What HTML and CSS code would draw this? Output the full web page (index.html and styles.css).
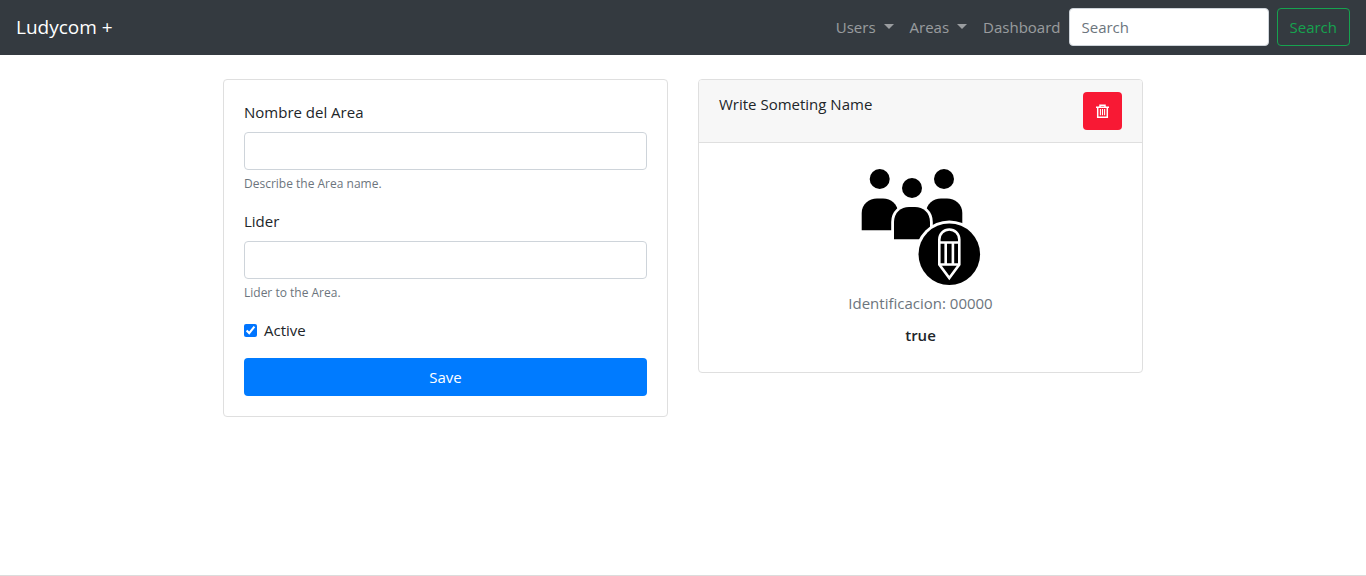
FILE: index.html
```html
<!DOCTYPE html>
<html lang="es">
<head>
<meta charset="utf-8">
<meta name="viewport" content="width=device-width, initial-scale=1">
<title>Ludycom +</title>
<link rel="stylesheet" href="styles.css">
</head>
<body>
<nav class="navbar">
  <a class="brand" href="#">Ludycom +</a>
  <ul class="nav-list">
    <li><a class="nav-link has-caret" href="#">Users</a></li>
    <li><a class="nav-link has-caret" href="#">Areas</a></li>
    <li><a class="nav-link" href="#">Dashboard</a></li>
  </ul>
  <form class="search">
    <input class="control search-input" type="search" placeholder="Search" aria-label="Search">
    <button class="btn btn-outline" type="submit">Search</button>
  </form>
</nav>
<main class="content">
  <form class="card card-body">
    <div class="group">
      <label class="label" for="name">Nombre del Area</label>
      <input class="control" id="name" type="text">
      <small class="hint">Describe the Area name.</small>
    </div>
    <div class="group">
      <label class="label" for="lider">Lider</label>
      <input class="control" id="lider" type="text">
      <small class="hint">Lider to the Area.</small>
    </div>
    <div class="group check">
      <input class="check-input" id="active" type="checkbox" checked>
      <label for="active">Active</label>
    </div>
    <button class="btn btn-primary" type="submit">Save</button>
  </form>
  <section class="card">
    <header class="card-header">
      <span>Write Someting Name</span>
      <button class="btn btn-danger" type="button" aria-label="Delete">
        <svg width="13" height="14" viewBox="0 0 13 14" fill="none" stroke="currentColor">
          <path d="M0 3.2h13M4 3V1.2h5V3" stroke-width="1.5"/>
          <path d="M1.7 3.5v9.7h9.6V3.5" stroke-width="1.5"/>
          <path d="M4.4 5v6.3M6.5 5v6.3M8.6 5v6.3" stroke-width="1.1"/>
        </svg>
      </button>
    </header>
    <div class="card-body profile">
      <svg class="picture" width="128" height="128" viewBox="0 0 128 128" aria-hidden="true">
        <circle cx="22.7" cy="16" r="10"/>
        <circle cx="55" cy="25" r="10"/>
        <circle cx="87" cy="16" r="10"/>
        <path d="M4.7 67.2V50C4.7 41 12 35.5 20 35.5h6C34 35.5 41 41 41 50v17.2z"/>
        <path d="M69 67.2V50c0-9 7-14.5 15-14.5h6c8 0 15.3 5.5 15.3 14.5v17.2z"/>
        <path d="M37 76.3V59C37 49.500 44 44 52 44h6c8 0 15 5.500 15 15v17.300z" stroke="#fff" stroke-width="5.600"/>
        <path d="M37 76.300V59C37 49.500 44 44 52 44h6c8 0 15 5.500 15 15v17.300z"/>
        <circle cx="92.300" cy="91.300" r="33.800" fill="#fff"/>
        <circle cx="92.300" cy="91.300" r="30.800"/>
        <g fill="none" stroke="#fff" stroke-width="2.600">
          <path d="M82.300 101.500V76.500a10 10 0 0 1 20 0V101.500l-10 13.500z"/>
          <path d="M82.300 79.500h20M82.300 101.500h20M88.700 79.500v22M95.900 79.500v22"/>
        </g>
      </svg>
      <p class="ident">Identificacion: 00000</p>
      <p class="state">true</p>
    </div>
  </section>
</main>
<footer class="footer"></footer>
</body>
</html>
```
FILE: styles.css
```css
* { box-sizing: border-box; }
body {
  margin: 0;
  min-height: 100vh;
  display: flex;
  flex-direction: column;
  font: 15px/24px "Open Sans", "Noto Sans", sans-serif;
  color: #212529;
  background: #fff;
}
a { color: inherit; text-decoration: none; }
p { margin: 0; }
.navbar {
  display: flex;
  align-items: center;
  padding: 8px 16px;
  border-bottom: 1px solid #343a40;
  background: #343a40;
}
.brand { margin-right: auto; font-size: 19px; line-height: 30px; color: #fff; }
.nav-list { display: flex; margin: 0; padding: 0; list-style: none; }
.nav-link { display: block; padding: 0 8px; color: rgba(255, 255, 255, .5); }
.has-caret::after {
  content: "";
  display: inline-block;
  margin-left: 8px;
  vertical-align: 4px;
  border: 5px solid transparent;
  border-top-color: currentColor;
  border-bottom: 0;
}
.search { display: flex; gap: 8px; }
.control {
  display: block;
  width: 100%;
  height: 38px;
  padding: 6px 12px;
  border: 1px solid #ced4da;
  border-radius: 4px;
  font: inherit;
  color: #495057;
  background: #fff;
}
.control::placeholder { color: #6c757d; opacity: 1; }
.search-input { width: 200px; appearance: none; }
.btn {
  height: 38px;
  padding: 6px 12px;
  border: 1px solid transparent;
  border-radius: 4px;
  font: inherit;
  color: #fff;
  cursor: pointer;
}
.btn-outline { border-color: #16a34f; color: #16a34f; background: transparent; }
.btn-primary { width: 100%; background: #007bff; }
.btn-danger {
  display: flex;
  align-items: center;
  background: #f81934;
}
.content {
  flex: 1;
  width: 100%;
  max-width: 968px;
  margin: 0 auto;
  padding: 24px 24px;
  display: grid;
  grid-template-columns: 1fr 1fr;
  align-items: start;
  gap: 30px;
}
.card { border: 1px solid #dfdfdf; border-radius: 4px; overflow: hidden; }
.card-body { padding: 20px; }
.card-header {
  display: flex;
  justify-content: space-between;
  align-items: flex-start;
  padding: 12px 20px;
  border-bottom: 1px solid #dfdfdf;
  background: #f7f7f7;
}
.group { margin-bottom: 16px; }
.label { display: block; margin-bottom: 8px; }
.hint { display: block; margin-top: 5px; font-size: 12px; line-height: 18px; color: #6c757d; }
.check { display: flex; align-items: center; gap: 7px; }
.check-input { width: 13px; height: 13px; margin: 0; accent-color: #0075ff; }
.profile { text-align: center; }
.picture { display: block; margin: 0 auto; }
.ident { margin-bottom: 8px; color: #6c757d; }
.state { margin-bottom: 5px; font-weight: 600; }
.footer { border-top: 1px solid #dcdcdc; }
```
